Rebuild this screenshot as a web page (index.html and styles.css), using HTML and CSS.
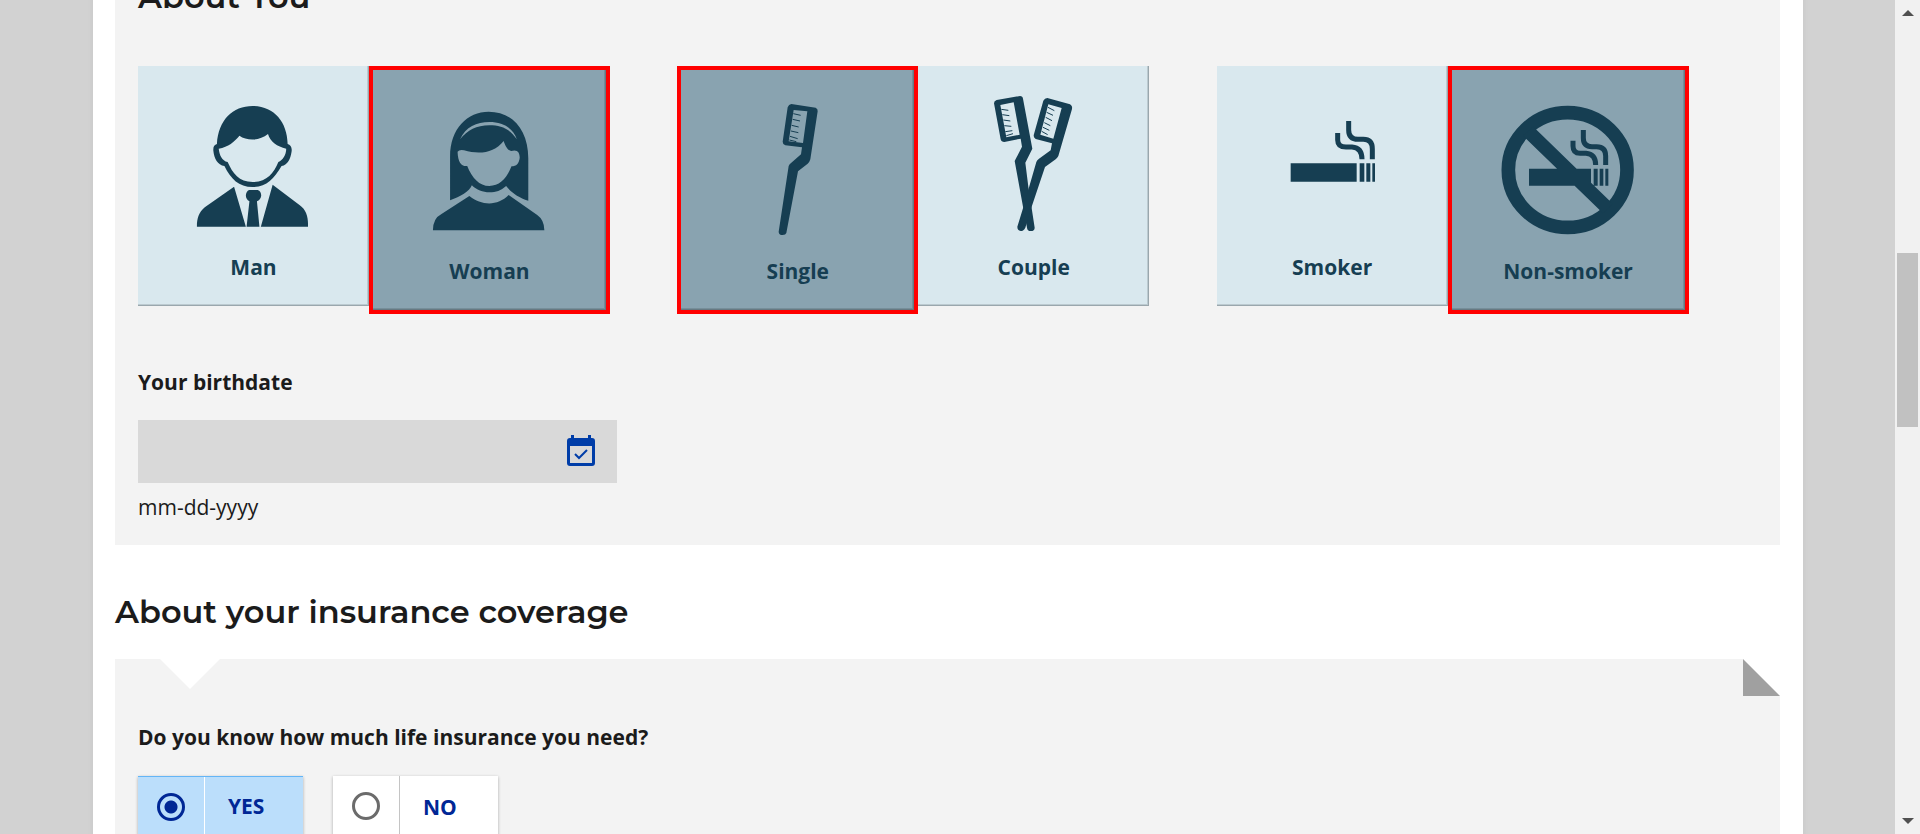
FILE: index.html
```html
<!DOCTYPE html>
<html lang="en">
<head>
<meta charset="utf-8">
<meta name="viewport" content="width=device-width, initial-scale=1">
<title>Life insurance quote</title>
<link rel="stylesheet" href="styles.css">
</head>
<body>
<div class="window">
  <div class="viewport">
    <main class="page">
      <section class="panel panel-you">
        <h2 class="heading">About You</h2>
        <div class="groups">
          <div class="group" role="radiogroup" aria-label="Gender">
            <label class="card">
              <input class="card-input" type="radio" name="gender" value="man">
              <svg class="card-icon" viewBox="263 258 448 450" preserveAspectRatio="none" aria-hidden="true">
                <path fill-rule="evenodd" d="M386 432C390 360 430 318 486 318C545 318 583 365 584 432C592 434 597 442 595 455C592 475 585 495 567 498C545 537 525 561 486 561C447 561 425 537 407 498C388 495 378 475 376 452C375 440 379 434 386 432ZM391 446C393 465 400 482 416 486C430 520 448 546 486 546C525 546 545 520 558 486C570 480 580 465 580 446C555 440 535 425 529 402C505 423 470 423 449 407C435 425 418 441 391 446Z"/>
                <path d="M434 560L467 680H330C330 655 335 638 352 622ZM542 554L618 616C636 630 642 650 641 680H509ZM476 570H500Q510 574 510 587Q508 600 498 604L505 680H469L477 604Q467 598 467 586Q468 574 476 570Z"/>
              </svg>
              <span class="card-label">Man</span>
            </label>
            <label class="card card-selected">
              <input class="card-input" type="radio" name="gender" value="woman" checked>
              <svg class="card-icon" viewBox="921 270 448 450" preserveAspectRatio="none" aria-hidden="true">
                <path fill-rule="evenodd" d="M1144 335C1210 335 1255 390 1255 475V602C1228 592 1210 580 1193 558C1178 572 1165 577 1146 577C1128 577 1110 570 1097 556C1090 575 1065 590 1036 601V470C1036 385 1085 335 1144 335ZM1064 418C1085 390 1110 376 1146 376C1180 376 1205 388 1223 418C1213 385 1185 366 1146 366C1110 366 1080 380 1064 418ZM1057 455C1058 488 1068 500 1084 498C1098 535 1118 558 1146 558C1175 558 1195 535 1208 499C1222 499 1229 490 1231 473C1231 458 1225 447 1207 453C1195 450 1190 435 1186 423C1160 458 1120 465 1075 451Q1062 448 1057 455Z"/>
                <path d="M1090 588C1125 618 1170 618 1200 585L1280 645Q1300 660 1300 691H988Q988 655 1012 642Z"/>
              </svg>
              <span class="card-label">Woman</span>
            </label>
          </div>
          <div class="group" role="radiogroup" aria-label="Household">
            <label class="card card-selected">
              <input class="card-input" type="radio" name="household" value="single" checked>
              <svg class="card-icon" viewBox="172 120 480 450" aria-hidden="true">
                <path fill-rule="evenodd" d="M392 162L465 173Q472 176 471 184L449 328Q447 336 441 341L412 364L377 549Q375 555 366 555Q354 555 354 545L384 348Q386 342 392 338L421 313L424 292L374 286Q366 283 366 275L381 172Q384 163 392 162ZM399 180L384 274L427 279L440 184Z"/>
                <path class="bristles" d="M398 191L420 196M396 208L418 213M393 226L414 231M391 243L413 248M388 259L411 266M386 270L407 275"/>
              </svg>
              <span class="card-label">Single</span>
            </label>
            <label class="card">
              <input class="card-input" type="radio" name="household" value="couple">
              <svg class="card-icon" viewBox="880 108 480 450" aria-hidden="true">
                <path fill-rule="evenodd" d="M1008 150L1078 138Q1086 138 1087 146L1115 296L1094 338L1103 410L1112 468L1122 533Q1122 543 1110 543Q1100 543 1099 533L1087 470L1062 333L1084 290L1080 266L1031 276Q1022 276 1020 268L1000 160Q1000 152 1008 150ZM1019 165L1037 262L1077 254L1059 157Z"/>
                <path fill-rule="evenodd" d="M1160 144L1228 163Q1236 168 1234 177L1193 318Q1190 324 1185 328L1153 351L1113 470L1094 533Q1089 543 1080 543Q1070 541 1070 530L1087 475L1127 336Q1129 330 1135 326L1170 301L1174 280L1125 267Q1118 262 1119 256L1148 152Q1152 144 1160 144ZM1163 163L1139 254L1178 266L1203 174Z"/>
                <path class="bristles" d="M1022 178L1043 181M1025 194L1046 197M1028 210L1049 213M1031 227L1052 229M1034 245L1055 242M1037 257L1057 251M1162 172L1181 182M1158 187L1177 196M1155 202L1174 212M1151 218L1169 227M1147 232L1166 241M1143 244L1161 254"/>
              </svg>
              <span class="card-label">Couple</span>
            </label>
          </div>
          <div class="group" role="radiogroup" aria-label="Smoking">
            <label class="card">
              <input class="card-input" type="radio" name="smoking" value="smoker">
              <svg class="card-icon" viewBox="158 108 480 450" aria-hidden="true">
                <path d="M274 340H472V395H274ZM481 340H495V395H481ZM501 340H513V395H501ZM519 340H527V395H519Z"/>
                <path class="smoke" d="M448 213V240Q448 268 476 268H492Q519 268 519 297V328M415 249V270Q415 291 440 291H458Q488 293 488 328"/>
              </svg>
              <span class="card-label">Smoker</span>
            </label>
            <label class="card card-selected">
              <input class="card-input" type="radio" name="smoking" value="non-smoker" checked>
              <svg class="card-icon" viewBox="866 120 480 450" aria-hidden="true">
                <ellipse class="ban" cx="1105" cy="360" rx="178" ry="172"/>
                <path d="M1002 230L1240 461L1211 490L971 257ZM989 356H1175V407H989ZM1183 356H1195V407H1183ZM1201 356H1212V407H1201ZM1218 356H1227V407H1218Z"/>
                <path class="smoke" d="M1152 240V264Q1152 290 1178 290H1192Q1219 290 1219 318V345M1121 272V288Q1121 310 1142 310H1160Q1189 312 1189 345"/>
              </svg>
              <span class="card-label">Non-smoker</span>
            </label>
          </div>
        </div>
        <div class="field">
          <label class="question" for="birthdate">Your birthdate</label>
          <div class="date">
            <input class="date-input" id="birthdate" type="text" aria-describedby="birthdate-hint">
            <button class="date-button" type="button" aria-label="Choose a date">
              <svg class="date-icon" viewBox="0 0 28 32" aria-hidden="true">
                <path fill-rule="evenodd" d="M4 0H7V3H21V0H24V3H25Q28 3 28 6V28Q28 31 25 31H3Q0 31 0 28V6Q0 3 3 3H4ZM3 11V28H25V11Z"/>
                <path class="tick" d="M8 19L12 23L20 15"/>
              </svg>
            </button>
          </div>
          <p class="hint" id="birthdate-hint">mm-dd-yyyy</p>
        </div>
      </section>
      <h2 class="heading heading-coverage">About your insurance coverage</h2>
      <section class="panel panel-coverage">
        <fieldset class="choices">
          <legend class="question">Do you know how much life insurance you need?</legend>
          <div class="options">
            <label class="option option-selected">
              <span class="option-mark"><input class="radio" type="radio" name="amount" value="yes" checked></span>
              <span class="option-text">YES</span>
            </label>
            <label class="option">
              <span class="option-mark"><input class="radio" type="radio" name="amount" value="no"></span>
              <span class="option-text">NO</span>
            </label>
          </div>
        </fieldset>
      </section>
    </main>
  </div>
  <div class="scrollbar" aria-hidden="true">
    <svg class="scroll-arrow" viewBox="0 0 12 6"><path d="M6 0L12 6H0Z"/></svg>
    <div class="scroll-track"><div class="scroll-thumb"></div></div>
    <svg class="scroll-arrow" viewBox="0 0 12 6"><path d="M0 0H12L6 6Z"/></svg>
  </div>
</div>
</body>
</html>
```
FILE: styles.css
```css
*, *::before, *::after { box-sizing: border-box; }

body {
  margin: 0;
  background: #d2d2d2;
  color: #1b1b1b;
  font-family: "Open Sans", "Noto Sans", sans-serif;
  font-size: 21px;
  line-height: 28px;
}

.window {
  display: flex;
  height: 100vh;
  overflow: hidden;
}

.viewport {
  flex: 1;
  overflow: hidden;
  padding: 0 92px 0 93px;
}

/* The page is scrolled part of the way down its first panel. */
.page {
  margin-top: -63px;
  padding: 0 23px 0 22px;
  background: #fff;
  box-shadow: 0 0 6px rgba(0, 0, 0, 0.06);
}

.panel {
  padding: 40px 24px 0 23px;
  background: #f3f3f3;
}

.heading {
  margin: 0;
  font-family: Montserrat, Inter, sans-serif;
  font-size: 32px;
  font-weight: 600;
  line-height: 40px;
}

.groups {
  display: grid;
  grid-template-columns: repeat(3, 1fr);
  margin-top: 49px;
}

.group {
  display: flex;
  align-items: flex-start;
  width: 87.5%;
}

.card {
  position: relative;
  display: flex;
  flex: 1 1 0;
  flex-direction: column;
  align-items: center;
  padding: 20px 0 25px;
  background: #d9e8ee;
  box-shadow: inset -1px -1px #9aa7ad, inset -2px -2px #bccad0;
  color: #163e52;
}

.card-selected {
  flex-basis: 10px;
  border: 4px solid #f00;
  background: #89a3b0;
  box-shadow: inset -1px -1px #667982, inset -2px -2px #768e99;
}

.card-input {
  position: absolute;
  inset: 0;
  margin: 0;
  opacity: 0;
}

.card-icon {
  width: 160px;
  height: 150px;
  fill: currentColor;
}

.card-label {
  margin-top: 17px;
  font-weight: 700;
}

.bristles { fill: none; stroke: currentColor; stroke-width: 3; }
.smoke { fill: none; stroke: currentColor; stroke-width: 15; }
.ban { fill: none; stroke: currentColor; stroke-width: 41; }

.field {
  margin-top: 54px;
  padding-bottom: 24px;
}

.question {
  display: block;
  padding: 0;
  font-weight: 700;
}

.date {
  display: flex;
  width: 479px;
  max-width: 100%;
  height: 63px;
  margin-top: 24px;
  background: #d9d9d9;
}

.date-input {
  flex: 1;
  min-width: 0;
  padding: 0 20px;
  border: 0;
  background: none;
  font: inherit;
}

.date-button {
  display: flex;
  align-items: center;
  padding: 0 22px 2px 12px;
  border: 0;
  background: none;
  color: #003da8;
}

.date-icon {
  width: 28px;
  height: 32px;
  fill: currentColor;
}

.tick { fill: none; stroke: currentColor; stroke-width: 2; }

.hint {
  margin: 10px 0 0;
  font-weight: 400;
}

.heading-coverage { padding: 47px 0 27px; }

.panel-coverage {
  position: relative;
  padding-top: 64px;
  padding-bottom: 60px;
}

.panel-coverage::before,
.panel-coverage::after {
  content: "";
  position: absolute;
  top: 0;
}

.panel-coverage::before {
  left: 45px;
  width: 60px;
  height: 30px;
  background: #fff;
  clip-path: polygon(0 0, 100% 0, 50% 100%);
}

.panel-coverage::after {
  right: 0;
  width: 37px;
  height: 37px;
  background: linear-gradient(to top right, #a0a0a0 49%, #fff 51%);
}

.choices {
  min-width: 0;
  margin: 0;
  padding: 0;
  border: 0;
}

.options {
  display: flex;
  gap: 30px;
  margin-top: 25px;
}

.option {
  display: flex;
  width: 165px;
  height: 60px;
  background: #fff;
  box-shadow: 0 1px 3px rgba(0, 0, 0, 0.3);
  color: #002795;
  font-weight: 700;
}

.option-mark {
  display: flex;
  align-items: center;
  justify-content: center;
  width: 67px;
  border-right: 1px solid #c4c4c4;
}

.option-text {
  padding: 17px 0 0 23px;
}

.option-selected {
  border-top: 1px solid #64b5f6;
  background: #bbdefb;
}

.option-selected .option-mark { border-color: #fff; }
.option-selected .option-text { padding-top: 15px; }

.radio {
  appearance: none;
  width: 28px;
  height: 28px;
  margin: 0;
  border: 3px solid #6b6b6b;
  border-radius: 50%;
}

.radio:checked {
  border-color: #002795;
  background: radial-gradient(circle, #002795 6px, transparent 7px);
}

.scrollbar {
  display: flex;
  flex-direction: column;
  align-items: center;
  width: 25px;
  padding: 10px 0;
  background: #f1f1f1;
}

.scroll-arrow {
  width: 12px;
  height: 6px;
  fill: #505050;
}

.scroll-track {
  flex: 1;
  align-self: stretch;
  padding: 237px 2px 0;
}

.scroll-thumb {
  height: 174px;
  background: #c1c1c1;
}
```
